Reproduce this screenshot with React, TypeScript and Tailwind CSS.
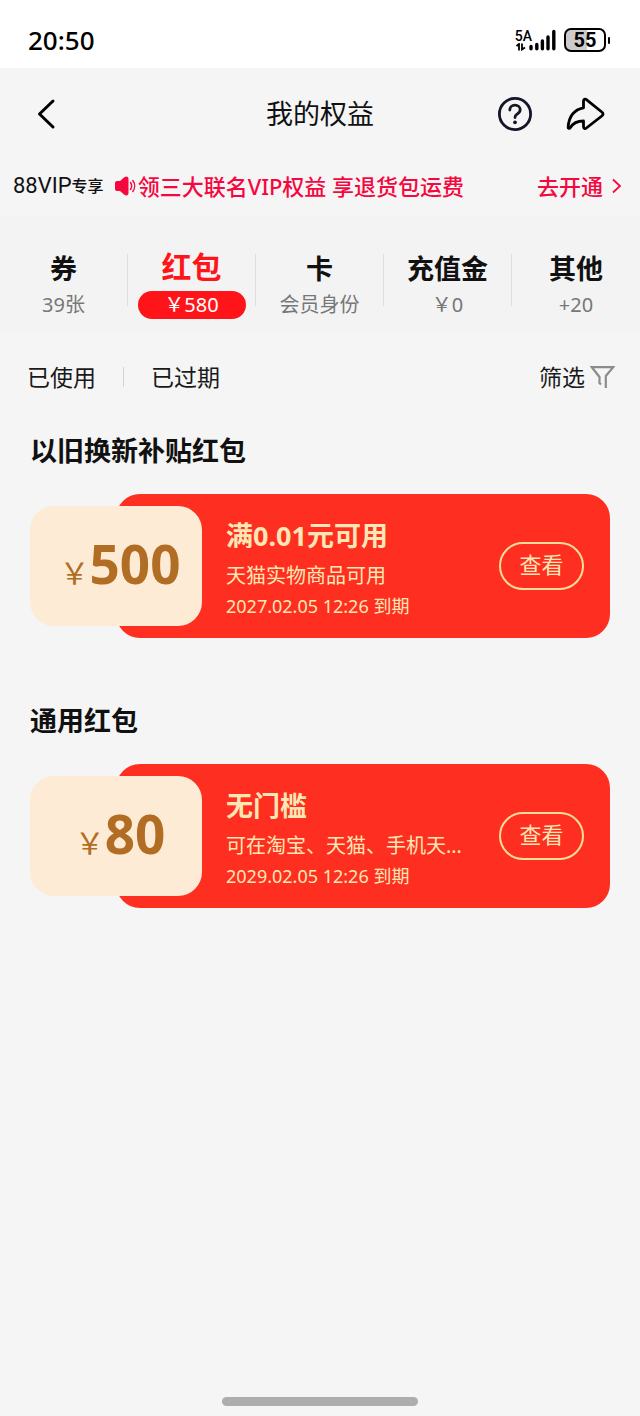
type Tab = { title: string; note: string; active?: boolean };

const tabs: Tab[] = [
  { title: "券", note: "39张" },
  { title: "红包", note: "￥580", active: true },
  { title: "卡", note: "会员身份" },
  { title: "充值金", note: "￥0" },
  { title: "其他", note: "+20" },
];

const coupons = [
  {
    group: "以旧换新补贴红包",
    amount: "500",
    title: "满0.01元可用",
    desc: "天猫实物商品可用",
    expires: "2027.02.05 12:26 到期",
  },
  {
    group: "通用红包",
    amount: "80",
    title: "无门槛",
    desc: "可在淘宝、天猫、手机天…",
    expires: "2029.02.05 12:26 到期",
  },
];

const StatusBar = () => {
  return (
    <div className="flex h-[68px] items-center justify-between bg-white pt-3 pr-[30px] pl-7 text-black">
      <span className="text-[26px] leading-8 font-medium">20:50</span>
      <div className="flex items-center gap-2">
        <div className="flex items-end">
          <div className="-mr-1 flex flex-col">
            <span className="font-['Roboto','Noto_Sans',sans-serif] text-[14px] leading-[14px] font-medium">
              5A
            </span>
            <svg className="ml-px" width="10" height="8" viewBox="0 0 10 8" fill="none" stroke="currentColor" strokeWidth="1.800">
              <path d="M.5 3 3 1V7.500M6 .5V6.500L9 4.500" />
            </svg>
          </div>
          <svg width="28" height="22" viewBox="0 0 28 22" stroke="currentColor" strokeWidth="3.400" strokeLinecap="round">
            <path d="M3 17.500V19.800M8.800 15.500V19.800M14.400 12V19.800M20 8V19.800M25.800 2.500V19.800" />
          </svg>
        </div>
        <div className="flex items-center gap-[2px]">
          <div className="flex h-6 w-[42px] items-center justify-center rounded-[7px] border-2 border-black bg-linear-to-r from-[#cccccc] from-55% to-white to-55% font-['Roboto','Noto_Sans',sans-serif] text-[20px] leading-5 font-bold">
            55
          </div>
          <span className="h-[7px] w-[2px] rounded-full bg-black" />
        </div>
      </div>
    </div>
  );
};

const Header = () => {
  return (
    <header className="grid h-[92px] grid-cols-[1fr_auto_1fr] items-center px-[34px]">
      <button type="button" aria-label="返回" className="justify-self-start">
        <svg width="24" height="32" viewBox="0 0 24 32" fill="none" stroke="#000" strokeWidth="3" strokeLinecap="round" strokeLinejoin="round">
          <path d="M19 3 5.500 16 19 29" />
        </svg>
      </button>
      <h1 className="text-[27px] leading-9 text-[#111111]">我的权益</h1>
      <div className="flex items-center gap-8 justify-self-end">
        <button type="button" aria-label="帮助">
          <svg width="36" height="36" viewBox="0 0 36 36" fill="none" stroke="#15152a" strokeWidth="2.800" strokeLinecap="round" strokeLinejoin="round">
            <circle cx="17" cy="18" r="15.600" />
            <path d="M11.800 14C11.800 11 14 9.200 17 9.200s5.200 1.900 5.200 4.600c0 2.400-1.500 3.300-3.200 4.400-1.400 1-2 1.700-2 3.300" />
            <circle cx="17" cy="26.300" r="1.900" fill="#15152a" stroke="none" />
          </svg>
        </button>
        <button type="button" aria-label="分享">
          <svg width="40" height="34" viewBox="0 0 40 34" fill="none" stroke="#000" strokeWidth="2.800" strokeLinejoin="round">
            <path d="M17.500 4.200c0-1.900 1.500-2.600 2.900-1.500L35.800 15c1.700 1.400 1.700 2.600 0 4L20.400 31c-1.400 1.100-2.900.5-2.900-1.400V24C10.500 24 7 26.200 4.400 30.600c-.9 1.400-2.500 1-2.300-.7C3 19.500 8.300 12.500 17.500 10.800Z" />
          </svg>
        </button>
      </div>
    </header>
  );
};

const VipBanner = () => {
  return (
    <a href="#vip" className="flex h-14 items-center pr-[18px] pb-1 pl-[13px] text-[22px] leading-8 font-medium text-[#f5083f]">
      <span className="flex items-center text-[#111111]">
        <span className="font-['Roboto','Noto_Sans',sans-serif] font-normal">88VIP</span>
        <span className="text-[16px]">专享</span>
      </span>
      <svg className="mr-[2px] ml-[10px]" width="22" height="20" viewBox="0 0 22 20" fill="#f5083f">
        <path d="M3 5H6l4-3.500C12.500-.3 14.500.5 14.500 3v14c0 2.500-2 3.300-4.500 1.500L6 15H3C1.500 15 1 14 1 12.500v-5C1 6 1.500 5 3 5Z" />
        <path d="M16.500 6.500c1.300 2 1.300 5 0 7M18.800 4.500c2.400 3.200 2.400 7.800 0 11" fill="none" stroke="#f5083f" strokeWidth="1.500" strokeLinecap="round" />
      </svg>
      <span>领三大联名VIP权益 享退货包运费</span>
      <span className="ml-auto flex items-center gap-2">
        去开通
        <svg width="11" height="16" viewBox="0 0 11 16" fill="none" stroke="currentColor" strokeWidth="1.800">
          <path d="M2 1.500 9 8l-7 6.500" />
        </svg>
      </span>
    </a>
  );
};

const TabBar = () => {
  return (
    <nav className="grid h-[116px] grid-cols-5 items-center divide-x divide-[#dedede] bg-[#f3f3f3] pt-3">
      {tabs.map((tab) => (
        <button key={tab.title} type="button" className="flex h-[52px] flex-col items-center justify-center pt-[10px]">
          <span
            className={
              tab.active
                ? "text-[30px] leading-8 font-bold text-[#ff1519]"
                : "text-[27px] leading-9 font-bold text-[#111111]"
            }
          >
            {tab.title}
          </span>
          <span
            className={
              tab.active
                ? "mt-2 w-[108px] rounded-full bg-[#ff1519] text-[20px] leading-7 text-white"
                : "mt-1 text-[20px] leading-7 text-[#777777]"
            }
          >
            {tab.note}
          </span>
        </button>
      ))}
    </nav>
  );
};

const FilterBar = () => {
  return (
    <div className="flex h-[90px] items-center pr-[25px] pl-[27px] text-[23px] leading-8 text-[#1a1a1a]">
      <button type="button">已使用</button>
      <span className="mx-[27px] h-5 w-px bg-[#d4d4d4]" />
      <button type="button">已过期</button>
      <button type="button" className="ml-auto flex items-center gap-[5px]">
        筛选
        <svg width="25" height="24" viewBox="0 0 25 24" fill="none" stroke="#8c8c8c" strokeWidth="2.200">
          <path d="M11 19.500 9.500 18V12L1.800 2.200H23.200L15.800 11V23" />
        </svg>
      </button>
    </div>
  );
};

const CouponCard = ({ coupon }: { coupon: (typeof coupons)[number] }) => {
  return (
    <section className="px-[30px] pb-[54px]">
      <h2 className="text-[27px] leading-[58px] font-bold text-[#111111]">{coupon.group}</h2>
      <div className="mt-[14px] flex items-center">
        <div className="z-10 flex h-[120px] w-[172px] shrink-0 items-baseline justify-center rounded-[24px] bg-[#feebd5] pt-[22px] pl-2 text-[#b26d24]">
          <span className="text-[30px] leading-[72px]">￥</span>
          <span className="text-[53px] leading-[72px] font-bold">{coupon.amount}</span>
        </div>
        <div className="-ml-[86px] flex h-36 min-w-0 flex-1 items-center rounded-[24px] bg-[#fe2e20] pr-[26px] pl-[110px] text-[#ffe7b5]">
          <div className="min-w-0 flex-1">
            <h3 className="text-[27px] leading-10 font-bold">{coupon.title}</h3>
            <p className="truncate text-[20px] leading-10">{coupon.desc}</p>
            <p className="text-[18px] leading-5">{coupon.expires}</p>
          </div>
          <button type="button" className="h-12 w-[85px] shrink-0 rounded-full border-2 border-[#ffdc9c] pb-1 text-[22px] leading-8">
            查看
          </button>
        </div>
      </div>
    </section>
  );
};

const App = () => {
  return (
    <div className="flex min-h-screen flex-col bg-[#f5f5f5] font-['Noto_Sans','Noto_Sans_CJK_SC',sans-serif]">
      <StatusBar />
      <Header />
      <VipBanner />
      <TabBar />
      <FilterBar />
      <main>
        {coupons.map((coupon) => (
          <CouponCard key={coupon.group} coupon={coupon} />
        ))}
      </main>
      <div className="mt-auto flex justify-center pb-[10px]">
        <span className="h-[9px] w-[196px] rounded-full bg-[#adadad]" />
      </div>
    </div>
  );
};

export default App;
